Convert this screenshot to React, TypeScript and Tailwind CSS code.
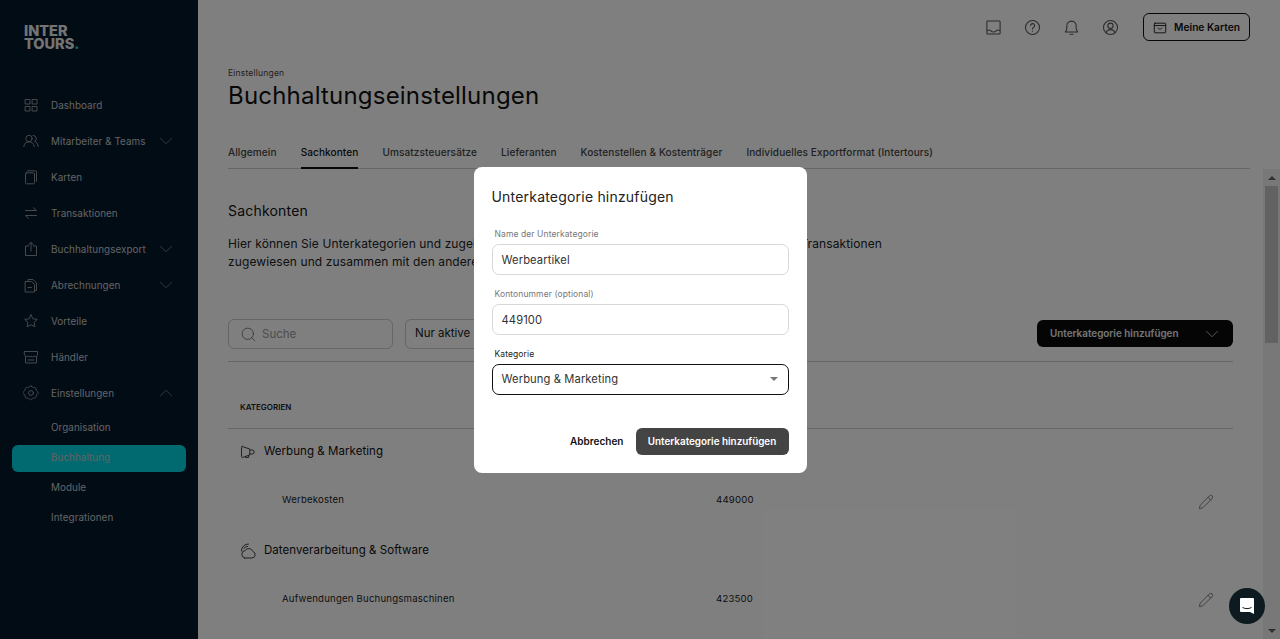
import React from "react";
import { ChevronDown, ChevronUp, Search, Pencil } from "lucide-react";

function Ico({ size = 16, children, className = "" }: { size?: number; children: React.ReactNode; className?: string }) {
  return (
    <svg width={size} height={size} viewBox="0 0 16 16" fill="none" stroke="currentColor" strokeWidth="1" strokeLinecap="round" strokeLinejoin="round" className={`shrink-0 ${className}`}>
      {children}
    </svg>
  );
}

const GridIcon = () => (<Ico><rect x="2.5" y="2.5" width="4.5" height="4.5" /><rect x="9.5" y="2.5" width="4.5" height="4.5" /><rect x="2.5" y="9.5" width="4.5" height="4.5" /><rect x="9.5" y="9.5" width="4.5" height="4.5" /></Ico>);
const TeamIcon = () => (<Ico><circle cx="6" cy="5.5" r="3.2" /><path d="M.8 13.5c.4-3 2.4-4.6 5.2-4.6s4.8 1.6 5.2 4.6" /><path d="M10 2.4a3.2 3.2 0 0 1 1.6 6c2 .5 3.2 2.2 3.6 5" /></Ico>);
const CardsIcon = () => (<Ico><rect x="2.5" y="3.8" width="9" height="11" rx="1" /><path d="M4.5 1.8h8a1 1 0 0 1 1 1v9.5" /></Ico>);
const SwapIcon = () => (<Ico><path d="M2.5 5.5h11L10.5 2.8" /><path d="M13.5 10.5h-11l3 2.8" /></Ico>);
const ExportIcon = () => (<Ico><path d="M5.5 5H2.5v9.5h11V5h-3" /><path d="M8 10V1.5M5.6 3.7 8 1.5l2.4 2.2" /></Ico>);
const DocsIcon = () => (<Ico><path d="M2.5 4.5h6l3 3v7.5h-9z" /><path d="M5 4.5V2.5h5l3.5 3.5v7.5h-2" /><path d="M5 10.5h3.5" /></Ico>);
const StarIcon = () => (<Ico><path d="M8 1.8l1.9 4 4.4.6-3.2 3 .8 4.4L8 11.7l-3.9 2.1.8-4.4-3.2-3 4.4-.6z" /></Ico>);
const StoreIcon = () => (<Ico><path d="M1.5 2.5h13v3.2a2 2 0 0 1-3.2 1.4 2.4 2.4 0 0 1-3.3 0 2.4 2.4 0 0 1-3.3 0 2 2 0 0 1-3.2-1.4z" /><path d="M2.5 7.5v6.5h11V7.5" /><path d="M5 11h6" /></Ico>);
const GearIcon = () => (<Ico><path d="M8 1.2c1 .9 1.8 1.4 3 1.3.9 0 1.5.6 1.6 1.5.1 1.1.6 2 1.6 2.7.7.6.7 1.6 0 2.2-1 .7-1.5 1.6-1.6 2.7-.1.9-.7 1.5-1.6 1.5-1.2-.1-2 .4-3 1.3-.6.5-1 .5-1.6 0-1-.9-1.8-1.4-3-1.3-.9 0-1.5-.6-1.6-1.5-.1-1.1-.6-2-1.6-2.7-.7-.6-.7-1.6 0-2.2 1-.7 1.5-1.6 1.6-2.7.1-.9.7-1.5 1.6-1.5 1.2.1 2-.4 3-1.3.6-.5 1-.5 1.6 0z" transform="translate(.4 0)" /><circle cx="8" cy="8" r="2.4" /></Ico>);

const nav = [
  { label: "Dashboard", Icon: GridIcon },
  { label: "Mitarbeiter & Teams", Icon: TeamIcon, chev: true },
  { label: "Karten", Icon: CardsIcon },
  { label: "Transaktionen", Icon: SwapIcon },
  { label: "Buchhaltungsexport", Icon: ExportIcon, chev: true },
  { label: "Abrechnungen", Icon: DocsIcon, chev: true },
  { label: "Vorteile", Icon: StarIcon },
  { label: "Händler", Icon: StoreIcon },
];
const sub = ["Organisation", "Buchhaltung", "Module", "Integrationen"];
const tabs = ["Allgemein", "Sachkonten", "Umsatzsteuersätze", "Lieferanten", "Kostenstellen & Kostenträger", "Individuelles Exportformat (Intertours)"];

function Field({ label, value, active }: { label: string; value: string; active?: boolean }) {
  return (
    <div className="flex flex-col">
      <label className={`h-[20px] pl-[3px] text-[8.5px] leading-[20px] tracking-[0.1px] ${active ? "text-[#222]" : "text-[#777]"}`}>{label}</label>
      <div className={`flex h-[31px] items-center justify-between rounded-[7px] border pl-[9px] pr-[10px] text-[11.2px] tracking-[0.1px] text-[#333] ${active ? "border-[#111]" : "border-[#d8d8d8] pt-[2px]"}`}>
        <span>{value}</span>
        {active && <span className="h-0 w-0 border-x-[4px] border-t-[4px] border-x-transparent border-t-[#777]" />}
      </div>
    </div>
  );
}

export default function App() {
  return (
    <div className="relative flex h-[639px] w-[1280px] overflow-hidden bg-white font-['Inter','Liberation_Sans',sans-serif] text-[#111]">
      <aside className="flex w-[198px] shrink-0 flex-col bg-[#04182a] text-[#c4c8ca]">
        <div className="pl-[24px] pt-[24px] text-[14.5px] font-extrabold leading-[13px] tracking-normal text-[#e8e8e8]">
          INTER<br />TOURS<span className="text-[#00c8d0]">.</span>
        </div>
        <nav className="mt-[37px] flex flex-col">
          {nav.map(({ label, Icon, chev }) => (
            <div key={label} className="flex h-[36px] items-center pl-[23px] text-[9.9px] tracking-[0.05px]">
              <span className="text-[#8e9296]"><Icon /></span>
              <span className="ml-[12px] flex-1">{label}</span>
              {chev && <ChevronDown size={22} strokeWidth={0.8} className="mr-[21px] text-[#8e9296]" />}
            </div>
          ))}
          <div className="flex h-[36px] items-center pl-[23px] text-[9.9px] tracking-[0.05px]">
            <span className="text-[#8e9296]"><GearIcon /></span>
            <span className="ml-[12px] flex-1">Einstellungen</span>
            <ChevronUp size={22} strokeWidth={0.8} className="mr-[21px] text-[#8e9296]" />
          </div>
          <div className="mt-[2px] flex flex-col gap-[3px] px-[12px] pt-[2px]">
            {sub.map((s) => (
              <div key={s} className={`flex h-[27px] items-center rounded-[6px] pb-[2px] pl-[39px] text-[9.9px] tracking-[0.05px] ${s === "Buchhaltung" ? "bg-[#00d4e0]" : ""}`}>{s}</div>
            ))}
          </div>
        </nav>
      </aside>

      <main className="flex min-w-0 flex-1 flex-col">
        <header className="flex h-[54px] shrink-0 items-center justify-end pr-[30px]">
          <div className="flex items-center gap-[22px] pr-[24px] text-[#555]">
            <Ico size={17}><rect x="1.8" y="1.8" width="12.4" height="12.4" rx="0.8" /><path d="M1.8 10.5h3.4c.3 1.2 1.4 1.8 2.8 1.8s2.5-.6 2.8-1.8h3.4" /></Ico>
            <Ico size={17}><circle cx="8" cy="8" r="6.6" /><path d="M6.2 6.2a1.9 1.9 0 1 1 2.6 1.8c-.6.3-.8.7-.8 1.4" /><path d="M8 11.4v.1" /></Ico>
            <Ico size={17}><path d="M2.2 12.2c1-1 1.4-2 1.4-3.7V6.4a4.4 4.4 0 0 1 8.8 0v2.1c0 1.7.4 2.7 1.4 3.7z" /><path d="M6.6 14.4h2.8" /></Ico>
            <Ico size={17}><circle cx="8" cy="8" r="6.6" /><circle cx="8" cy="6.4" r="2.5" /><path d="M3.8 13c.6-2 2.2-3 4.2-3s3.6 1 4.2 3" /></Ico>
          </div>
          <button className="flex h-[28px] w-[107px] items-center justify-center gap-[7px] rounded-[6px] border border-[#111] pt-[1px] text-[10.2px] font-semibold">
            <Ico size={14}><rect x="1.5" y="2.5" width="13" height="11" rx="0.8" /><path d="M1.5 5.2h13" /><path d="M5.8 8c.6 1 1.3 1.4 2.2 1.4s1.6-.4 2.2-1.4" /></Ico>
            Meine Karten
          </button>
        </header>

        <div className="pl-[30px] pr-[30px]">
          <div className="pt-[13px] text-[8.5px] leading-[12px] tracking-[0.2px] text-[#444]">Einstellungen</div>
          <h1 className="mt-[1px] text-[24px] font-normal leading-[32px] tracking-[0.2px]">Buchhaltungseinstellungen</h1>
          <div className="mt-[29px] flex gap-[24px] border-b border-[#ccc] text-[10.05px] font-medium tracking-[0.1px] text-[#444]">
            {tabs.map((t) => (
              <div key={t} className={`-mb-px flex h-[28px] items-center border-b-2 pb-[3px] ${t === "Sachkonten" ? "border-[#111] text-[#111]" : "border-transparent"}`}>{t}</div>
            ))}
          </div>
        </div>

        <div className="flex min-h-0 flex-1">
          <div className="min-w-0 flex-1 pl-[30px] pr-[30px]">
            <h2 className="pt-[32px] text-[14px] font-normal leading-[20px] tracking-[0.2px]">Sachkonten</h2>
            <div className="mt-[14px] w-[654px] text-[12px] leading-[18px] tracking-[0.1px] text-[#222]">
              <div className="flex justify-between"><span>Hier können Sie Unterkategorien und zugehörige</span><span>Transaktionen</span></div>
              <div>zugewiesen und zusammen mit den anderen Geschäftsdaten</div>
            </div>
            <div className="mt-[48px] flex items-center border-b border-[#ccc] pb-[12px]">
              <div className="flex h-[30px] w-[165px] items-center gap-[5px] rounded-[6px] border border-[#ccc] pl-[11px] text-[11.5px] text-[#999]">
                <Search size={17} strokeWidth={1} className="text-[#555]" /><span className="pt-[1px]">Suche</span>
              </div>
              <div className="ml-[12px] flex h-[30px] w-[120px] items-center rounded-[6px] border border-[#ccc] pl-[9px] text-[11.5px] text-[#222]">Nur aktive</div>
              <button className="mb-[2px] ml-auto flex h-[27px] w-[196px] items-center justify-between rounded-[6px] bg-[#0a0a0a] pl-[13px] pr-[10px] pt-[1px] text-[9.9px] font-semibold text-[#e8eaf0]">
                Unterkategorie hinzufügen
                <ChevronDown size={22} strokeWidth={0.8} />
              </button>
            </div>
            <div className="flex h-[67px] items-end border-b border-[#ccc] pb-[15px] pl-[12px] text-[8px] font-semibold leading-[12px] text-[#222]">KATEGORIEN</div>

            <div className="flex h-[45px] items-center pl-[12px] text-[11.5px] tracking-[0.05px]">
              <Ico className="mr-[8px] text-[#444]"><path d="M2.2 2.5 9.8 5v6L2.2 13.5a1 1 0 0 1-.7-1V3.5a1 1 0 0 1 .7-1z" /><path d="M9.8 6h2.4a2 2 0 0 1 0 4H9.8" /><path d="M5.5 12.3v1.2h3.2v-2.2" /></Ico>Werbung &amp; Marketing
            </div>
            <div className="flex h-[54px] items-center pb-[1px] pl-[54px] pr-[19px] text-[9.6px] tracking-[0.2px] text-[#222]">
              <span className="w-[434px]">Werbekosten</span><span>449000</span>
              <Pencil size={16} strokeWidth={1} className="ml-auto mt-[3px] text-[#444]" />
            </div>
            <div className="flex h-[45px] items-center pl-[12px] text-[11.5px] tracking-[0.05px]">
              <Ico className="mr-[8px] text-[#444]"><path d="M4.5 15H12a3.3 3.3 0 0 0 1-6.4A4.5 4.5 0 0 0 5 7.6 3.8 3.8 0 0 0 4.5 15z" /><path d="M1.5 8A6.5 6.5 0 0 1 8.5 1" /><path d="M3.8 5.5A4 4 0 0 1 7.5 3.4" /></Ico>Datenverarbeitung &amp; Software
            </div>
            <div className="flex h-[54px] items-center pb-[1px] pl-[54px] pr-[19px] text-[9.6px] tracking-[0.2px] text-[#222]">
              <span className="w-[434px]">Aufwendungen Buchungsmaschinen</span><span>423500</span>
              <Pencil size={16} strokeWidth={1} className="ml-auto text-[#444]" />
            </div>
          </div>
          <div className="flex w-[17px] shrink-0 flex-col items-center bg-[#f0f0f0]">
            <div className="flex h-[17px] items-center justify-center">
              <span className="h-0 w-0 border-x-[4px] border-b-[4px] border-x-transparent border-b-[#606060]" />
            </div>
            <div className="h-[157px] w-[13px] bg-[#c4c4c4]" />
            <div className="mt-auto flex h-[17px] items-center justify-center">
              <span className="h-0 w-0 border-x-[4px] border-t-[4px] border-x-transparent border-t-[#606060]" />
            </div>
          </div>
        </div>
      </main>

      <div className="absolute inset-0 flex items-center justify-center bg-black/50">
        <div className="flex h-[306px] w-[333px] flex-col rounded-[8px] bg-white px-[18px] pb-[18px] pt-[20px]">
          <h3 className="text-[14px] font-normal leading-[20px] tracking-[0.2px] text-[#222]">Unterkategorie hinzufügen</h3>
          <div className="mt-[17px] flex flex-col gap-[9px]">
            <Field label="Name der Unterkategorie" value="Werbeartikel" />
            <Field label="Kontonummer (optional)" value="449100" />
            <Field label="Kategorie" value="Werbung & Marketing" active />
          </div>
          <div className="mt-auto flex items-center justify-end gap-[12px]">
            <button className="text-[10px] font-semibold text-[#111]">Abbrechen</button>
            <button className="flex h-[27px] w-[153px] items-center justify-center rounded-[6px] bg-[#444] text-[9.9px] font-semibold text-white">Unterkategorie hinzufügen</button>
          </div>
        </div>
      </div>

      <div className="absolute bottom-[15px] right-[15px] flex h-[36px] w-[36px] items-center justify-center rounded-full bg-[#0d1a20]">
        <svg width="16" height="18" viewBox="0 0 16 18">
          <path d="M2 1h12a1 1 0 0 1 1 1v15l-4-2H2a1 1 0 0 1-1-1V2a1 1 0 0 1 1-1z" fill="#fff" />
          <path d="M3.5 10.5c3 1.5 6 1.5 9 0" stroke="#0d1a20" fill="none" strokeWidth="1" />
        </svg>
      </div>
    </div>
  );
}
